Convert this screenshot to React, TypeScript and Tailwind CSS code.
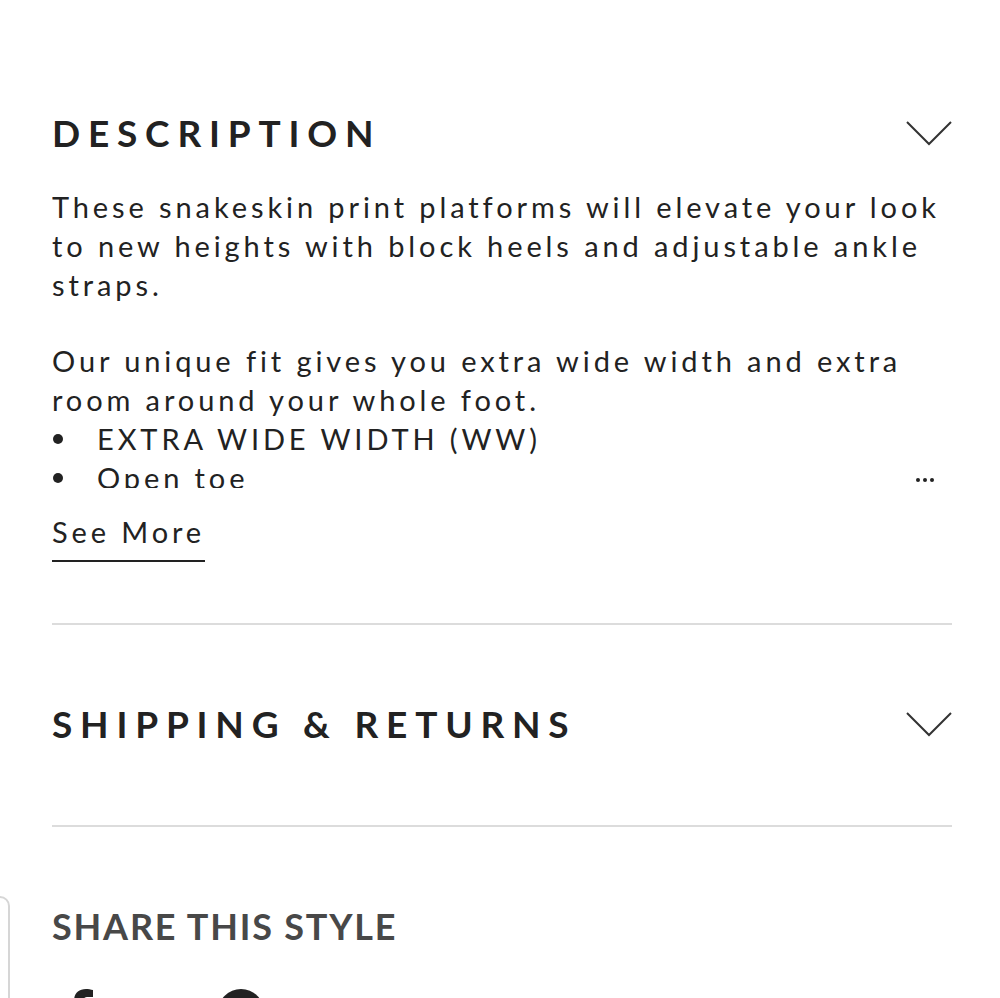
import { useState } from "react";

const Chevron = () => (
    <svg width="46" height="26" viewBox="0 0 46 26" fill="none" stroke="#333" strokeWidth="2">
        <polyline points="1,2 23,24 45,2" />
    </svg>
);

const SectionHeader = ({ title }: { title: string }) => (
    <div className="flex items-center justify-between h-[50px]">
        <h2 className="text-[37px] font-bold tracking-[7.8px] text-[#222]">{title}</h2>
        <Chevron />
    </div>
);

const App = () => {
    const [expanded] = useState(false);

    return (
        <div className="relative h-screen bg-white overflow-hidden" style={{ fontFamily: "Lato, 'Open Sans', sans-serif" }}>
            <div className="pl-[52px] pr-[48px] pt-[108px]">
                <section>
                    <SectionHeader title="DESCRIPTION" />
                    <div className={`relative mt-[30px] text-[29px] leading-[38.8px] tracking-[3.9px] text-[#222] ${expanded ? '' : 'h-[300px] overflow-hidden'}`}>
                        <p>These snakeskin print platforms will elevate your look to new heights with block heels and adjustable ankle straps.</p>
                        <p className="mt-[38px]">Our unique fit gives you extra wide width and extra room around your whole foot.</p>
                        <ul>
                            <li className="flex items-center gap-[34px] pl-[1px]"><span className="w-[10px] h-[10px] rounded-full bg-[#222]" />EXTRA WIDE WIDTH (WW)</li>
                            <li className="flex items-center gap-[34px] pl-[1px]"><span className="w-[10px] h-[10px] rounded-full bg-[#222]" />Open toe</li>
                            <li className="flex items-center gap-[34px] pl-[1px]"><span className="w-[10px] h-[10px] rounded-full bg-[#222]" />Adjustable ankle strap</li>
                        </ul>
                        <div className="absolute right-[18px] bottom-[6px] flex gap-[3px]">
                            <span className="w-[4px] h-[4px] rounded-full bg-[#222]" />
                            <span className="w-[4px] h-[4px] rounded-full bg-[#222]" />
                            <span className="w-[4px] h-[4px] rounded-full bg-[#222]" />
                        </div>
                    </div>
                    <button className="mt-[26px] text-[29px] tracking-[3.9px] text-[#222] border-b-2 border-[#222] leading-[36px] pb-[10px]">See More</button>
                </section>
                <div className="mt-[61px] border-t-2 border-[#dcdcdc]" />
                <section className="pt-[74px] pb-[76px]">
                    <SectionHeader title="SHIPPING & RETURNS" />
                </section>
                <div className="border-t-2 border-[#dcdcdc]" />
                <section className="pt-[76px]">
                    <h3 className="text-[36px] font-bold tracking-[1.8px] text-[#484848] leading-[46px]">SHARE THIS STYLE</h3>
                    <div className="flex items-start gap-[122px] mt-[40px] pl-[14px]">
                        <svg width="30" height="60" viewBox="0 0 30 60" fill="#222">
                            <path d="M20 0 C12 0 8 5 8 12 L8 20 L2 20 L2 28 L8 28 L8 60 L17 60 L17 28 L25 28 L26 20 L17 20 L17 13 C17 10 18 8 22 8 L27 8 L27 1 C25 0.5 22 0 20 0 Z" />
                        </svg>
                        <svg width="46" height="46" viewBox="0 0 46 46">
                            <circle cx="23" cy="23" r="23" fill="#222" />
                        </svg>
                    </div>
                </section>
            </div>
            <div className="absolute left-[-40px] top-[896px] w-[50px] h-[200px] border-2 border-[#d6d6d6] rounded-[10px] bg-white" />
        </div>
    );
};

export default App;
